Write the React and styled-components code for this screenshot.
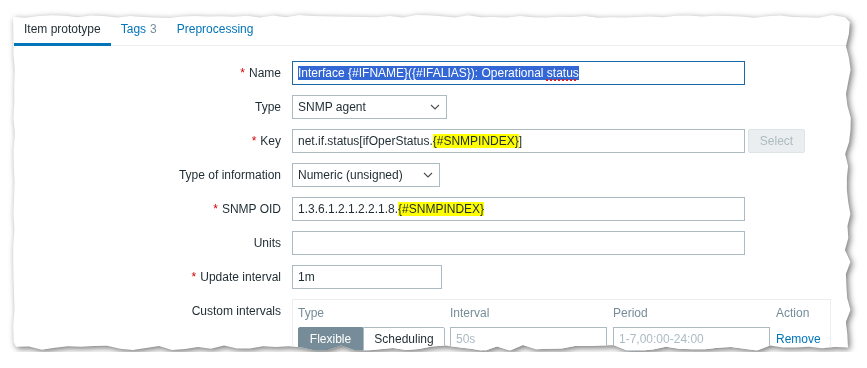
import React from 'react';
import styled, { createGlobalStyle } from 'styled-components';

const Global = createGlobalStyle`
  html, body { margin: 0; padding: 0; background: #fff; }
  body {
    font-family: Arial, "Liberation Sans", sans-serif;
    font-size: 12px;
    color: #1f2c33;
  }
`;

const W = 839;
const H = 338;

function rand(seed) {
  let s = seed;
  return () => {
    s = (s * 9301 + 49297) % 233280;
    return s / 233280;
  };
}

function tornClip() {
  const r = rand(11);
  const pts = [];
  for (let x = 0; x <= W - 6; x += 13) pts.push([x, 1 + r() * 3]);
  for (let y = 8; y <= H - 8; y += 12) pts.push([W - 1 - r() * 6, y]);
  for (let x = W - 4; x >= 0; x -= 13) pts.push([x, H - 1 - r() * 6]);
  for (let y = H - 10; y >= 8; y -= 16) pts.push([r() * 2, y]);
  return `polygon(${pts.map(([x, y]) => `${x.toFixed(1)}px ${y.toFixed(1)}px`).join(',')})`;
}

const CLIP = tornClip();

const Stage = styled.div`
  padding: 14px 0 0 13px;
`;

const Shadow = styled.div`
  width: ${W}px;
  filter: drop-shadow(2px 2px 3px rgba(0, 0, 0, 0.55));
`;

const Paper = styled.div`
  width: ${W}px;
  height: ${H}px;
  background: #fff;
  clip-path: ${CLIP};
  overflow: hidden;
`;

const TabBar = styled.div`
  display: flex;
  height: 32px;
  box-sizing: border-box;
  padding-left: 1px;
  margin-right: 4px;
  border-bottom: 1px solid #ebeef0;
`;

const Tab = styled.div`
  display: flex;
  align-items: center;
  height: 32px;
  box-sizing: border-box;
  padding: 1px 10px 0;
  margin-bottom: -1px;
  color: ${p => (p.$active ? '#1f2c33' : '#0275b8')};
  border-bottom: 3px solid ${p => (p.$active ? '#0275b8' : 'transparent')};
  white-space: nowrap;
`;

const Count = styled.span`
  color: #768d99;
  margin-left: 4px;
`;

const Form = styled.div`
  display: grid;
  grid-template-columns: 268px auto;
  column-gap: 11px;
  row-gap: 10px;
  padding-top: 15px;
  justify-content: start;
`;

const Label = styled.div`
  line-height: 24px;
  text-align: right;
  white-space: nowrap;
`;

const Req = styled.span`
  color: #d40000;
  margin-right: 4px;
`;

const FieldRow = styled.div`
  display: flex;
  align-items: center;
  gap: 3px;
`;

const Input = styled.div`
  width: ${p => p.$w}px;
  height: 24px;
  box-sizing: border-box;
  border: 1px solid ${p => (p.$focus ? '#1a68a8' : '#acbbc2')};
  padding: 0 5px;
  line-height: 22px;
  background: #fff;
  white-space: nowrap;
  overflow: hidden;
  color: ${p => (p.$placeholder ? '#acbbc2' : '#1f2c33')};
`;

const Selected = styled.span`
  background: #3367d6;
  color: #fff;
`;

const Misspelled = styled.span`
  text-decoration: underline dotted #e02020;
  text-decoration-thickness: 2px;
  text-underline-offset: 2px;
`;

const Macro = styled.span`
  background: #ffff00;
`;

const SelectBox = styled.div`
  width: ${p => p.$w}px;
  height: 24px;
  box-sizing: border-box;
  border: 1px solid #acbbc2;
  padding: 0 6px 0 5px;
  display: flex;
  align-items: center;
  justify-content: space-between;
  background: #fff;
`;

const Chevron = () => (
  <svg width="10" height="6" viewBox="0 0 10 6">
    <path d="M1 1 L5 5 L9 1" fill="none" stroke="#4f4f4f" strokeWidth="1.1" />
  </svg>
);

const GrayButton = styled.div`
  width: 57px;
  height: 24px;
  box-sizing: border-box;
  border: 1px solid #dfe4e7;
  border-radius: 2px;
  background: #ebeef0;
  color: #acbbc2;
  display: flex;
  align-items: center;
  justify-content: center;
`;

const IntervalsBox = styled.div`
  width: 539px;
  box-sizing: border-box;
  border: 1px solid #ebeef0;
  padding: 4px 5px 5px;
`;

const IntervalGrid = styled.div`
  display: grid;
  grid-template-columns: 147px 157px 157px auto;
  column-gap: 5px;
  row-gap: 5px;
  & > :nth-child(4n + 3) { margin-left: 1px; }
  & > :nth-child(4n + 4) { margin-left: 2px; }
`;

const Head = styled.div`
  color: #768d99;
  line-height: 18px;
`;

const Segmented = styled.div`
  display: flex;
  height: 24px;
`;

const SegBtn = styled.div`
  width: ${p => p.$w}px;
  height: 24px;
  box-sizing: border-box;
  display: flex;
  align-items: center;
  justify-content: center;
  background: ${p => (p.$on ? '#768d99' : '#fff')};
  color: ${p => (p.$on ? '#fff' : '#1f2c33')};
  border: 1px solid ${p => (p.$on ? '#768d99' : '#acbbc2')};
  border-radius: ${p => (p.$first ? '2px 0 0 2px' : '0 2px 2px 0')};
`;

const Link = styled.span`
  color: #0275b8;
  line-height: 24px;
  border-bottom: 1px dotted #0275b8;
`;

const LinkCell = styled.div`
  display: flex;
  align-items: center;
`;

export default function App() {
  return (
    <>
      <Global />
      <Stage>
        <Shadow>
          <Paper>
            <TabBar>
              <Tab $active>Item prototype</Tab>
              <Tab>Tags<Count>3</Count></Tab>
              <Tab>Preprocessing</Tab>
            </TabBar>
            <Form>
              <Label><Req>*</Req>Name</Label>
              <Input $w={453} $focus>
                <Selected>Interface {'{#IFNAME}'}({'{#IFALIAS}'}): Operational <Misspelled>status</Misspelled></Selected>
              </Input>

              <Label>Type</Label>
              <SelectBox $w={155}>SNMP agent<Chevron /></SelectBox>

              <Label><Req>*</Req>Key</Label>
              <FieldRow>
                <Input $w={453}>net.if.status[ifOperStatus.<Macro>{'{#SNMPINDEX}'}</Macro>]</Input>
                <GrayButton>Select</GrayButton>
              </FieldRow>

              <Label>Type of information</Label>
              <SelectBox $w={148}>Numeric (unsigned)<Chevron /></SelectBox>

              <Label><Req>*</Req>SNMP OID</Label>
              <Input $w={453}>1.3.6.1.2.1.2.2.1.8.<Macro>{'{#SNMPINDEX}'}</Macro></Input>

              <Label>Units</Label>
              <Input $w={453} />

              <Label><Req>*</Req>Update interval</Label>
              <Input $w={150}>1m</Input>

              <Label>Custom intervals</Label>
              <IntervalsBox>
                <IntervalGrid>
                  <Head>Type</Head>
                  <Head>Interval</Head>
                  <Head>Period</Head>
                  <Head>Action</Head>
                  <Segmented>
                    <SegBtn $w={65} $on $first>Flexible</SegBtn>
                    <SegBtn $w={82}>Scheduling</SegBtn>
                  </Segmented>
                  <Input $w={157} $placeholder>50s</Input>
                  <Input $w={157} $placeholder>1-7,00:00-24:00</Input>
                  <LinkCell><Link>Remove</Link></LinkCell>
                </IntervalGrid>
              </IntervalsBox>
            </Form>
          </Paper>
        </Shadow>
      </Stage>
    </>
  );
}
